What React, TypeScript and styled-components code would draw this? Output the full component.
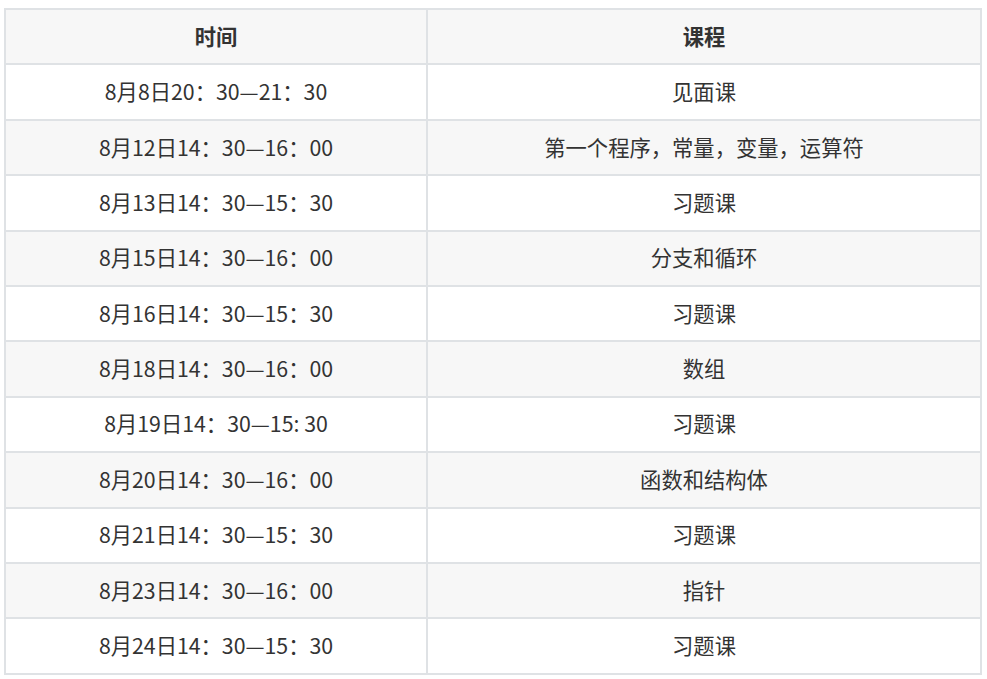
import React from "react";
import styled, { createGlobalStyle } from "styled-components";

const GlobalStyle = createGlobalStyle`
    body {
        margin: 0;
        padding: 0;
        background: #fff;
        font-family: "Noto Sans CJK SC", "Open Sans", sans-serif;
        color: #333;
    }
`;

const rows: [string, string][] = [
    ["8月8日20：30—21：30", "见面课"],
    ["8月12日14：30—16：00", "第一个程序，常量，变量，运算符"],
    ["8月13日14：30—15：30", "习题课"],
    ["8月15日14：30—16：00", "分支和循环"],
    ["8月16日14：30—15：30", "习题课"],
    ["8月18日14：30—16：00", "数组"],
    ["8月19日14：30—15: 30", "习题课"],
    ["8月20日14：30—16：00", "函数和结构体"],
    ["8月21日14：30—15：30", "习题课"],
    ["8月23日14：30—16：00", "指针"],
    ["8月24日14：30—15：30", "习题课"],
];

const App = () => {
    return (
        <>
            <GlobalStyle />
            <Page>
                <Table>
                    <colgroup>
                        <col style={{ width: 422 }} />
                        <col />
                    </colgroup>
                    <thead>
                        <Row $shaded>
                            <HeadCell>时间</HeadCell>
                            <HeadCell>课程</HeadCell>
                        </Row>
                    </thead>
                    <tbody>
                        {rows.map(([time, course], i) => (
                            <Row key={i} $shaded={i % 2 === 1}>
                                <Cell>{time}</Cell>
                                <Cell>{course}</Cell>
                            </Row>
                        ))}
                    </tbody>
                </Table>
            </Page>
        </>
    );
};

const Page = styled.div`
    padding: 8px 0 0 4px;
`;

const Table = styled.table`
    border-collapse: collapse;
    table-layout: fixed;
    width: 978px;
    font-size: 21.3px;
`;

const Row = styled.tr<{ $shaded?: boolean }>`
    background: ${(p) => (p.$shaded ? "#f7f7f7" : "#fff")};
`;

const Cell = styled.td`
    border: 2px solid #dfe2e5;
    height: 51.4px;
    padding: 0 17px 2px;
    text-align: center;
    vertical-align: middle;
    line-height: 1.5;
`;

const HeadCell = styled(Cell).attrs({ as: "th" })`
    font-weight: bold;
`;

export default App;
